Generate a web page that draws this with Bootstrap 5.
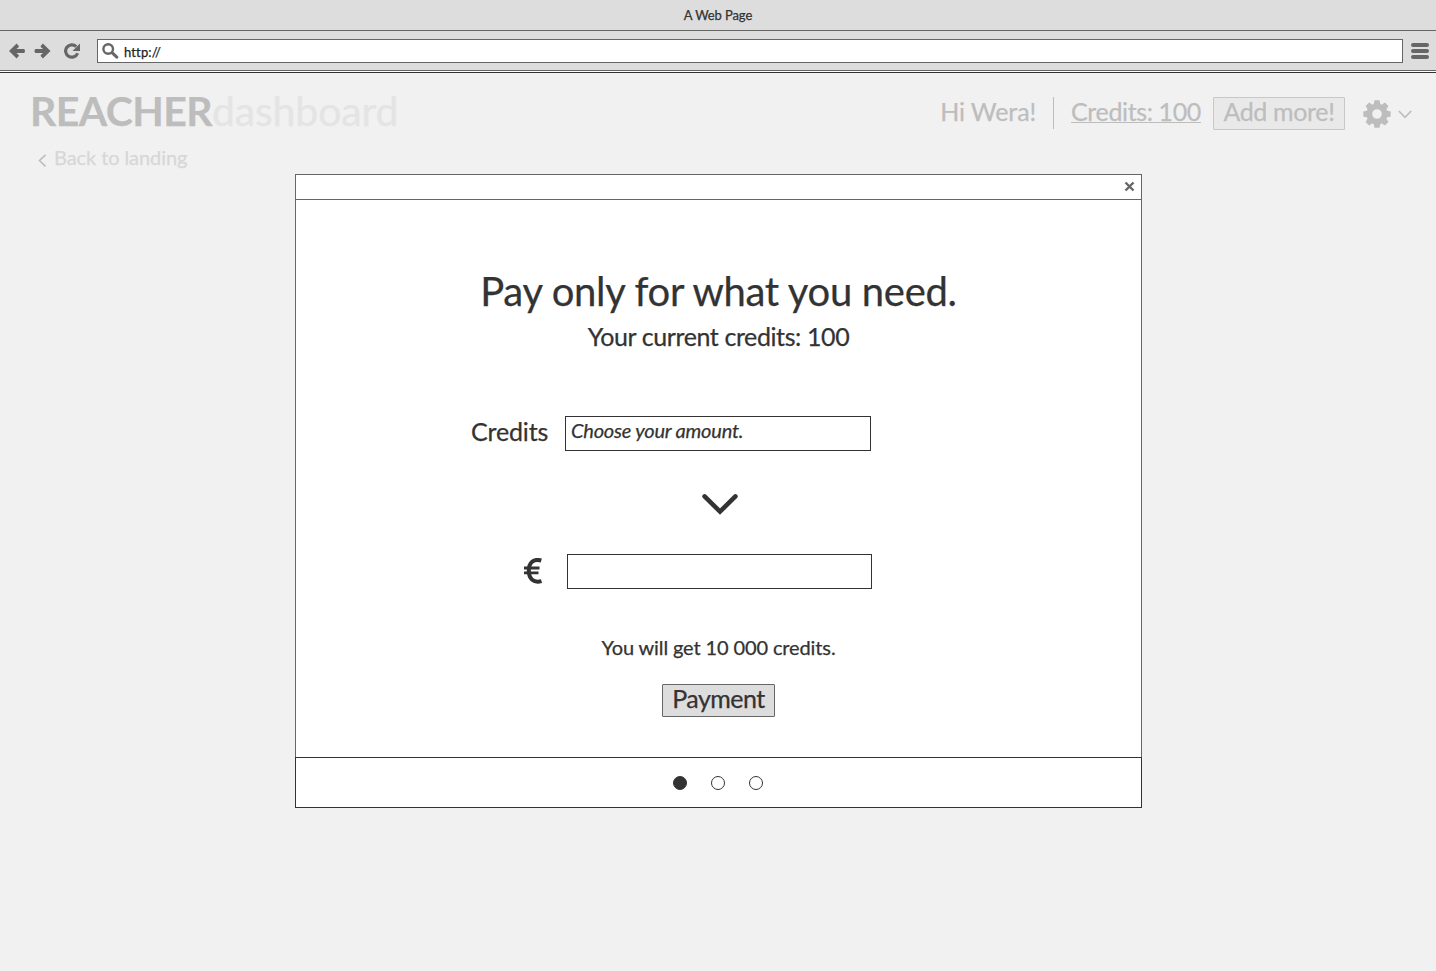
<!DOCTYPE html>
<html lang="en">
<head>
<meta charset="utf-8">
<title>A Web Page</title>
<link rel="stylesheet" href="https://cdn.jsdelivr.net/npm/bootstrap@5.3.0/dist/css/bootstrap.min.css">
<style>
  body { font-family: Lato, sans-serif; color: #333; background: #f1f1f1; height: 971px; overflow: hidden; -webkit-text-stroke: .25px; }
  .chrome-title { height: 31px; border-bottom: 1px solid #666; background: #ddd; font-size: 13px; line-height: 30px; letter-spacing: -.1px; }
  .chrome-bar { height: 40px; border-bottom: 1px solid #666; background: #ddd; padding: 0 7px 0 8px; }
  .chrome-edge { height: 2px; background: #fff; border-bottom: 1px solid #333; }
  .address { height: 24px; border: 1px solid #666; background: #fff; margin: 0 8px 0 16px; font-size: 13px; line-height: 24px; color: #222; }
  .address span { margin: 2px 0 0 5px; letter-spacing: .15px; }
  .reload { margin-left: 11px; }
  .top { height: 101px; padding: 13px 24px 0 30px; }
  .brand { font-size: 41px; line-height: 50px; color: #e4e4e4; letter-spacing: -.15px; }
  .brand b { color: #bdbdbd; font-weight: 700; letter-spacing: -.6px; }
  .back { font-size: 20px; line-height: 24px; color: #d7d7d7; margin-top: 9px; padding-left: 8px; letter-spacing: -.08px; }
  .back svg { margin: 6px 7px 0 0; }
  .account { font-size: 25px; line-height: 28px; color: #bdbdbd; margin-top: 11px; height: 33px; letter-spacing: -.1px; }
  .account a { color: inherit; text-decoration: none; border-bottom: 1px solid #bdbdbd; height: 26px; letter-spacing: -.37px; }
  .divide { width: 1px; height: 32px; background: #bdbdbd; margin: 0 17px; }
  .gear { margin-top: 3px; }
  .caret { margin: 13px 0 0 7px; }
  .btn.flat { width: 113px; margin-top: 24px; font-size: 25px; line-height: 27px; letter-spacing: -.5px; padding: 0 0 4px; height: 33px; border-radius: 1px; border: 1px solid #666; background: #ddd; color: #333; }
  .btn.faded { width: 132px; background: #e9e9e9; border-color: #c8c8c8; color: #bdbdbd; margin: 0 18px 0 12px; letter-spacing: -.35px; }
  .dialog { width: 847px; height: 634px; border: 1px solid #666; background: #fff; margin-left: 295px; }
  .dialog-head { height: 25px; border-bottom: 1px solid #666; padding: 6px 6px 0 0; }
  .dialog-foot { height: 51px; border: 1px solid #333; margin: 0 -1px -1px; padding: 1px 1px 0 0; gap: 24px; }
  .headline { font-size: 40px; line-height: 48px; font-weight: 400; margin: 67px 0 0; letter-spacing: -.31px; }
  .current { font-size: 25px; line-height: 30px; margin-top: 6px; letter-spacing: -.4px; }
  .credits-row { margin: 65px 0 0 175px; }
  .credits-row label { font-size: 25px; line-height: 31px; width: 94px; letter-spacing: -.15px; }
  .down { margin: 42px 0 0 3px; }
  .euro-row { margin: 39px 0 0 228px; }
  .euro-row svg { margin: 4px 23px 0 0; }
  .entry { width: 306px; height: 35px; border: 1px solid #333; padding: 0 5px; font-size: 20px; line-height: 26px; font-style: italic; letter-spacing: -.21px; }
  .euro-row .entry { width: 305px; }
  .result { font-size: 20px; line-height: 24px; margin-top: 46px; letter-spacing: -.12px; padding-bottom: 1px; }
  .dot { width: 14px; height: 14px; border: 1px solid #333; border-radius: 50%; }
  .dot.on { background: #333; }
  svg { display: block; flex: none; }
</style>
<script src="https://cdn.jsdelivr.net/npm/bootstrap@5.3.0/dist/js/bootstrap.bundle.min.js"></script>
</head>
<body>
<div class="chrome-title text-center">A Web Page</div>
<div class="chrome-bar d-flex align-items-center">
  <svg width="18" height="16" viewBox="0 0 18 16"><path d="M1 8 8.6.5l2.2 2.4v1L8.4 6.1h7.4q1.2 0 1.2 1.9t-1.2 1.9H8.4l2.4 2.2v1l-2.2 2.4z" fill="#666"/></svg>
  <svg class="ms-2" width="18" height="16" viewBox="0 0 18 16"><path d="M16.5 8 8.9.5 6.7 2.9v1l2.4 2.2H1.7Q.5 6.1.5 8t1.2 1.9h7.4l-2.4 2.2v1l2.2 2.4z" fill="#666"/></svg>
  <svg class="reload" width="18" height="16" viewBox="0 0 18 16"><path d="M13.2 3.6A6.2 6.2 0 1 0 14.6 10.2" fill="none" stroke="#666" stroke-width="3.2"/><path d="M17 .5V8H9.5z" fill="#666"/></svg>
  <div class="address flex-grow-1 d-flex align-items-center"><svg class="ms-1" width="17" height="16" viewBox="0 0 17 16"><circle cx="6.2" cy="6" r="4.8" fill="none" stroke="#666" stroke-width="2.4"/><path d="m10 9.7 4.8 4.5" stroke="#666" stroke-width="3" stroke-linecap="round"/></svg><span>http://</span></div>
  <svg width="18" height="16" viewBox="0 0 18 16"><path d="M2 2h14M2 8h14M2 14h14" stroke="#666" stroke-width="4" stroke-linecap="round"/></svg>
</div>
<div class="chrome-edge"></div>
<header class="top d-flex justify-content-between">
  <div>
    <div class="brand"><b>REACHER</b><span>dashboard</span></div>
    <div class="back d-flex align-items-center"><svg width="9" height="13" viewBox="0 0 9 13"><path d="M7.5.8 1.5 6.5l6 5.8" fill="none" stroke="#bdbdbd" stroke-width="1.6"/></svg><span>Back to landing</span></div>
  </div>
  <div class="account d-flex">
    <span>Hi Wera!</span><span class="divide"></span><a href="#">Credits: 100</a>
    <button class="btn flat faded">Add more!</button>
    <svg class="gear" width="28" height="28" viewBox="-14 -14 28 28"><g fill="#bdbdbd"><path fill-rule="evenodd" d="M0-10.5A10.5 10.5 0 1 1 0 10.5A10.5 10.5 0 1 1 0-10.5M0-4.8A4.8 4.8 0 1 0 0 4.8A4.8 4.8 0 1 0 0-4.8"/><path id="tooth" d="M-3.4-9.5-2.5-13.7H2.5L3.4-9.5z"/><use href="#tooth" transform="rotate(45)"/><use href="#tooth" transform="rotate(90)"/><use href="#tooth" transform="rotate(135)"/><use href="#tooth" transform="rotate(180)"/><use href="#tooth" transform="rotate(225)"/><use href="#tooth" transform="rotate(270)"/><use href="#tooth" transform="rotate(315)"/></g></svg>
    <svg class="caret" width="14" height="9" viewBox="0 0 14 9"><path d="m.8 1 6.2 6.3L13.2 1" fill="none" stroke="#bdbdbd" stroke-width="1.7"/></svg>
  </div>
</header>
<main class="dialog d-flex flex-column">
  <div class="dialog-head d-flex justify-content-end"><svg width="11" height="11" viewBox="0 0 11 11"><path d="m1.5 1.5 8 8m0-8-8 8" stroke="#666" stroke-width="2.4"/></svg></div>
  <div class="flex-grow-1 d-flex flex-column align-items-center">
    <h1 class="headline">Pay only for what you need.</h1>
    <div class="current">Your current credits: 100</div>
    <div class="credits-row d-flex align-self-start"><label>Credits</label><div class="entry">Choose your amount.</div></div>
    <svg class="down" width="38" height="22" viewBox="0 0 38 22"><path d="M3.6 3.4 19 18.6 34.4 3.4" fill="none" stroke="#333" stroke-width="4.6" stroke-linecap="round"/></svg>
    <div class="euro-row d-flex align-self-start"><svg width="20" height="26" viewBox="0 0 20 26"><path d="M17.3 2.5C9.5.2 4.8 5 4.8 12.8s4.7 12.5 12.7 10.3" fill="none" stroke="#333" stroke-width="4"/><path d="M0 10h15.5M0 14.9h14.5" fill="none" stroke="#333" stroke-width="2.9"/></svg><div class="entry"></div></div>
    <div class="result">You will get 10 000 credits.</div>
    <button class="btn flat">Payment</button>
  </div>
  <div class="dialog-foot d-flex align-items-center justify-content-center"><span class="dot on"></span><span class="dot"></span><span class="dot"></span></div>
</main>
</body>
</html>
